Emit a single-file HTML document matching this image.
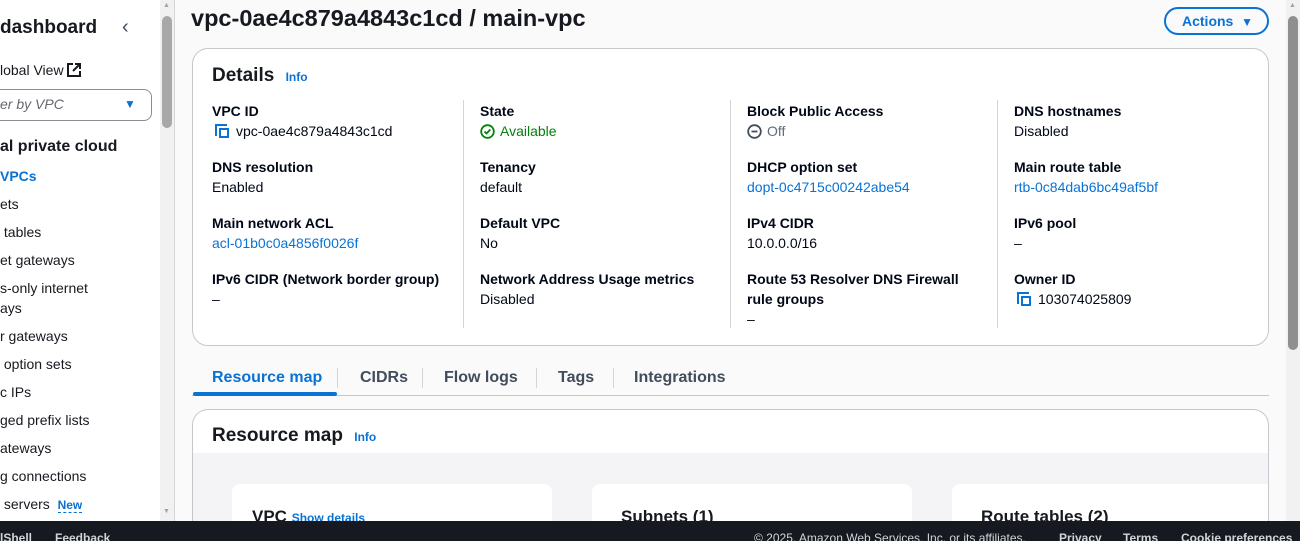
<!DOCTYPE html>
<html><head><meta charset="utf-8"><style>
*{margin:0;padding:0;box-sizing:border-box}
html,body{width:1300px;height:541px;overflow:hidden}
body{background:#fafafb;font-family:"Liberation Sans",sans-serif;color:#16191f;position:relative;font-size:14px}
.a{position:absolute;white-space:nowrap}
.side{position:absolute;left:0;top:0;width:175px;height:541px;background:#fff;border-right:1px solid #d5d5d9}
.nav{font-size:14px;color:#16191f}
.lbl{font-weight:bold;font-size:14px;color:#000716}
.val{font-size:14px;color:#000716}
.lnk{color:#0972d3}
.card{position:absolute;background:#fff;border:1px solid #c6c6cd;border-radius:16px}
.div{position:absolute;width:1px;background:#d5d5d9;top:100px;height:228px}
.copy{display:inline-block;position:relative;width:16px;height:14px;vertical-align:-2px;margin-right:6px}
.copy:before{content:"";position:absolute;left:1px;top:0;width:10px;height:10px;border-left:2px solid #0972d3;border-top:2px solid #0972d3}
.copy:after{content:"";position:absolute;left:5px;top:4px;width:10px;height:10px;border:2px solid #0972d3;box-sizing:border-box}
.tab{font-size:16px;font-weight:bold;color:#414d5c}
</style></head><body>
<div class="side">
<div class="a" style="left:0;top:17px;font-size:19px;font-weight:bold">dashboard</div>
<div class="a" style="left:122px;top:16px;font-size:20px;color:#414d5c">&#8249;</div>
<div class="a nav" style="left:0;top:62px">lobal View <svg width="14" height="14" viewBox="0 0 14 14" style="vertical-align:-2px"><path d="M6 1H1v12h12V8" fill="none" stroke="#16191f" stroke-width="2"/><path d="M8 1h5v5M13 1L6 8" fill="none" stroke="#16191f" stroke-width="2"/></svg></div>
<div style="position:absolute;left:-10px;top:89px;width:162px;height:32px;border:1px solid #8c8c94;border-radius:8px"></div>
<div class="a" style="left:0;top:96px;font-style:italic;color:#656871">er by VPC</div>
<div class="a" style="left:124px;top:97px;color:#0972d3;font-size:12px">&#9660;</div>
<div class="a" style="left:0;top:138px;font-size:16px;font-weight:bold">al private cloud</div>
<div class="a nav" style="left:0;top:168px;color:#0972d3;font-weight:bold">VPCs</div>
<div class="a nav" style="left:0;top:196px">ets</div>
<div class="a nav" style="left:0;top:224px">&nbsp;tables</div>
<div class="a nav" style="left:0;top:252px">et gateways</div>
<div class="a nav" style="left:0;top:280px">s-only internet</div>
<div class="a nav" style="left:0;top:300px">ays</div>
<div class="a nav" style="left:0;top:328px">r gateways</div>
<div class="a nav" style="left:0;top:356px">&nbsp;option sets</div>
<div class="a nav" style="left:0;top:384px">c IPs</div>
<div class="a nav" style="left:0;top:412px">ged prefix lists</div>
<div class="a nav" style="left:0;top:440px">ateways</div>
<div class="a nav" style="left:0;top:468px">g connections</div>
<div class="a nav" style="left:0;top:496px">&nbsp;servers &nbsp;<span style="color:#0972d3;font-weight:bold;font-size:12px;border-bottom:1px dashed #0972d3">New</span></div>
<div style="position:absolute;left:160px;top:0;width:14px;height:521px;background:#f1f1f1"></div>
<div class="a" style="left:163px;top:2px;font-size:7px;color:#a3a3a3">&#9650;</div>
<div class="a" style="left:163px;top:508px;font-size:7px;color:#a3a3a3">&#9660;</div>
<div style="position:absolute;left:162px;top:16px;width:10px;height:112px;background:#a8a8a8;border-radius:5px"></div>
</div>
<div style="position:absolute;left:1286px;top:0;width:14px;height:521px;background:#f1f1f1"></div>
<div class="a" style="left:1289px;top:2px;font-size:7px;color:#a3a3a3">&#9650;</div>
<div style="position:absolute;left:1288px;top:16px;width:10px;height:334px;background:#8f8f8f;border-radius:5px"></div>

<div class="a" style="left:191px;top:5px;font-size:23.5px;font-weight:bold">vpc-0ae4c879a4843c1cd / main-vpc</div>
<div style="position:absolute;left:1164px;top:7px;width:105px;height:28px;border:2px solid #0972d3;border-radius:16px;color:#0972d3;font-weight:bold;font-size:14px;line-height:24px;padding-left:16px">Actions &nbsp;<span style="font-size:12px">&#9660;</span></div>

<div class="card" style="left:192px;top:48px;width:1077px;height:298px"></div>
<div class="a" style="left:212px;top:65px;font-size:19px;font-weight:bold">Details <span style="font-size:12px;color:#0972d3;margin-left:6px">Info</span></div>
<div class="div" style="left:463px"></div><div class="div" style="left:730px"></div><div class="div" style="left:997px"></div>

<div class="a lbl" style="left:212px;top:103px">VPC ID</div>
<div class="a val" style="left:214px;top:123px"><span class="copy"></span>vpc-0ae4c879a4843c1cd</div>
<div class="a lbl" style="left:212px;top:159px">DNS resolution</div>
<div class="a val" style="left:212px;top:179px">Enabled</div>
<div class="a lbl" style="left:212px;top:215px">Main network ACL</div>
<div class="a val lnk" style="left:212px;top:235px">acl-01b0c0a4856f0026f</div>
<div class="a lbl" style="left:212px;top:271px">IPv6 CIDR (Network border group)</div>
<div class="a val" style="left:212px;top:291px">–</div>

<div class="a lbl" style="left:480px;top:103px">State</div>
<svg class="a" style="left:480px;top:124px" width="15" height="15" viewBox="0 0 15 15"><circle cx="7.5" cy="7.5" r="6.3" fill="none" stroke="#037f0c" stroke-width="1.8"/><path d="M4.5 7.5l2 2 3.8-4" fill="none" stroke="#037f0c" stroke-width="1.8"/></svg>
<div class="a val" style="left:500px;top:123px;color:#037f0c">Available</div>
<div class="a lbl" style="left:480px;top:159px">Tenancy</div>
<div class="a val" style="left:480px;top:179px">default</div>
<div class="a lbl" style="left:480px;top:215px">Default VPC</div>
<div class="a val" style="left:480px;top:235px">No</div>
<div class="a lbl" style="left:480px;top:271px">Network Address Usage metrics</div>
<div class="a val" style="left:480px;top:291px">Disabled</div>

<div class="a lbl" style="left:747px;top:103px">Block Public Access</div>
<svg class="a" style="left:747px;top:124px" width="15" height="15" viewBox="0 0 15 15"><circle cx="7.5" cy="7.5" r="6.3" fill="none" stroke="#414d5c" stroke-width="1.8"/><path d="M4.5 7.5h6" stroke="#414d5c" stroke-width="1.8"/></svg>
<div class="a val" style="left:767px;top:123px;color:#5f6b7a">Off</div>
<div class="a lbl" style="left:747px;top:159px">DHCP option set</div>
<div class="a val lnk" style="left:747px;top:179px">dopt-0c4715c00242abe54</div>
<div class="a lbl" style="left:747px;top:215px">IPv4 CIDR</div>
<div class="a val" style="left:747px;top:235px">10.0.0.0/16</div>
<div class="a lbl" style="left:747px;top:271px">Route 53 Resolver DNS Firewall</div>
<div class="a lbl" style="left:747px;top:291px">rule groups</div>
<div class="a val" style="left:747px;top:311px">–</div>

<div class="a lbl" style="left:1014px;top:103px">DNS hostnames</div>
<div class="a val" style="left:1014px;top:123px">Disabled</div>
<div class="a lbl" style="left:1014px;top:159px">Main route table</div>
<div class="a val lnk" style="left:1014px;top:179px">rtb-0c84dab6bc49af5bf</div>
<div class="a lbl" style="left:1014px;top:215px">IPv6 pool</div>
<div class="a val" style="left:1014px;top:235px">–</div>
<div class="a lbl" style="left:1014px;top:271px">Owner ID</div>
<div class="a val" style="left:1016px;top:291px"><span class="copy"></span>103074025809</div>

<div style="position:absolute;left:192px;top:395px;width:1077px;height:1px;background:#c6c6cd"></div>
<div class="a tab" style="left:212px;top:369px;color:#0972d3">Resource map</div>
<div style="position:absolute;left:193px;top:392px;width:144px;height:4px;background:#0972d3;border-radius:2px"></div>
<div style="position:absolute;left:337px;top:368px;width:1px;height:20px;background:#d5d5d9"></div>
<div class="a tab" style="left:360px;top:369px">CIDRs</div>
<div style="position:absolute;left:422px;top:368px;width:1px;height:20px;background:#d5d5d9"></div>
<div class="a tab" style="left:444px;top:369px">Flow logs</div>
<div style="position:absolute;left:536px;top:368px;width:1px;height:20px;background:#d5d5d9"></div>
<div class="a tab" style="left:558px;top:369px">Tags</div>
<div style="position:absolute;left:613px;top:368px;width:1px;height:20px;background:#d5d5d9"></div>
<div class="a tab" style="left:634px;top:369px">Integrations</div>

<div class="card" style="left:192px;top:409px;width:1077px;height:125px;overflow:hidden;border-bottom:none;border-radius:16px 16px 0 0">
<div style="position:absolute;left:0;top:43px;width:100%;height:100px;background:#f4f4f6"></div>
<div style="position:absolute;left:39px;top:74px;width:320px;height:80px;background:#fff;border-radius:8px"></div>
<div style="position:absolute;left:399px;top:74px;width:320px;height:80px;background:#fff;border-radius:8px"></div>
<div style="position:absolute;left:759px;top:74px;width:330px;height:80px;background:#fff;border-radius:8px"></div>
</div>
<div class="a" style="left:212px;top:425px;font-size:19px;font-weight:bold">Resource map <span style="font-size:12px;color:#0972d3;margin-left:6px">Info</span></div>
<div class="a" style="left:252px;top:507px;font-size:17px;font-weight:bold">VPC <span style="font-size:12px;color:#0972d3">Show details</span></div>
<div class="a" style="left:621px;top:507px;font-size:17px;font-weight:bold">Subnets (1)</div>
<div class="a" style="left:981px;top:507px;font-size:17px;font-weight:bold">Route tables (2)</div>

<div style="position:absolute;left:0;top:521px;width:1300px;height:20px;background:#16191f"></div>
<div class="a" style="left:0;top:531px;color:#d1d5db;font-size:12px;font-weight:bold">lShell</div>
<div class="a" style="left:55px;top:531px;color:#d1d5db;font-size:12px;font-weight:bold">Feedback</div>
<div class="a" style="left:754px;top:531px;color:#d1d5db;font-size:12px">© 2025, Amazon Web Services, Inc. or its affiliates.</div>
<div class="a" style="left:1059px;top:531px;color:#d1d5db;font-size:12px;font-weight:bold">Privacy</div>
<div class="a" style="left:1123px;top:531px;color:#d1d5db;font-size:12px;font-weight:bold">Terms</div>
<div class="a" style="left:1181px;top:531px;color:#d1d5db;font-size:12px;font-weight:bold">Cookie preferences</div>
</body></html>
